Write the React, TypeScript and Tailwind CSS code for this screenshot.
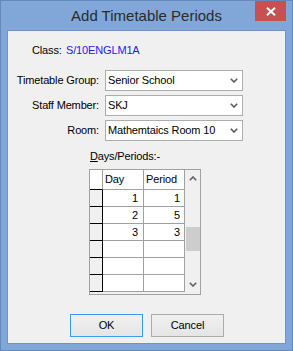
import React from "react";

function Chevron({ up = false, color = "#5a5a5a" }: { up?: boolean; color?: string }) {
  return (
    <svg width="8" height="5" viewBox="0 0 8 5" className="block">
      <path
        d={up ? "M0.8 4.2 L4 1 L7.2 4.2" : "M0.8 0.8 L4 4 L7.2 0.8"}
        fill="none"
        stroke={color}
        strokeWidth="1.6"
      />
    </svg>
  );
}

function Combo({ label, value }: { label: string; value: string }) {
  return (
    <div className="flex items-center h-[21px]">
      <div className="w-[92px] text-right pr-[1px]">{label}</div>
      <div className="ml-[5px] w-[138px] h-[21px] border border-[#acacac] bg-white flex items-center justify-between pl-[2px] pr-[4px]">
        <span>{value}</span>
        <Chevron />
      </div>
    </div>
  );
}

const rows: [string, string][] = [
  ["1", "1"],
  ["2", "5"],
  ["3", "3"],
  ["", ""],
  ["", ""],
  ["", ""],
];

export default function App() {
  return (
    <div className="w-[293px] h-[351px] bg-[#80a7d7] border border-[#6489bd] flex flex-col font-['Liberation_Sans',Arial,sans-serif] text-[11px] leading-[13px] text-black tracking-[-0.15px]">
      <div className="h-[29px] relative flex items-center justify-center">
        <span className="text-[15px] leading-[18px] text-[#2b2b2b] tracking-normal">Add Timetable Periods</span>
        <div className="absolute right-[6px] top-0 w-[31px] h-[20px] bg-[#c75050] flex items-center justify-center">
          <svg width="10" height="9" viewBox="0 0 10 9">
            <path d="M1 0.8 L9 8.2 M9 0.8 L1 8.2" stroke="white" strokeWidth="2" />
          </svg>
        </div>
      </div>
      <div className="mx-[6px] mb-[6px] flex-1 border border-[#6f93c6] bg-[#f0f0f0] flex flex-col">
        <div className="mt-[13px] pl-[24px] flex">
          <span className="w-[34px]">Class:</span>
          <span className="text-[#2222f0]">S/10ENGLM1A</span>
        </div>
        <div className="mt-[13px] flex flex-col gap-[4px]">
          <Combo label="Timetable Group:" value="Senior School" />
          <Combo label="Staff Member:" value="SKJ" />
          <Combo label="Room:" value="Mathemtaics Room 10" />
        </div>
        <div className="mt-[9px] pl-[82px]">
          <span className="underline underline-offset-1">D</span>ays/Periods:-
        </div>
        <div className="mt-[6px] ml-[81px] w-[112px] h-[126px] border border-[#a0a0a0] bg-[#f0f0f0] flex">
          <div className="flex flex-col w-[95px]">
            <div className="flex h-[20px]">
              <div className="w-[13px] bg-white border-r border-b border-[#a0a0a0] border-b-black" />
              <div className="w-[41px] bg-white border-r border-b border-[#a0a0a0] pl-[2px] flex items-center">Day</div>
              <div className="w-[41px] bg-white border-r border-b border-[#a0a0a0] pl-[2px] flex items-center">Period</div>
            </div>
            {rows.map((r, i) => (
              <div key={i} className="flex h-[17px]">
                <div className="w-[13px] bg-[#f0f0f0] border-r border-b border-black" />
                <div className="w-[41px] bg-white border-r border-b border-[#a0a0a0] pr-[5px] flex items-center justify-end">{r[0]}</div>
                <div className="w-[41px] bg-white border-r border-b border-[#a0a0a0] pr-[4px] flex items-center justify-end">{r[1]}</div>
              </div>
            ))}
          </div>
          <div className="w-[15px] bg-[#f0f0f0] flex flex-col items-center">
            <div className="h-[14px] flex items-center justify-center mt-[1px]">
              <Chevron up color="#606060" />
            </div>
            <div className="mt-[42px] w-[14px] h-[24px] bg-[#cdcdcd]" />
            <div className="mt-auto mb-[5px] h-[10px] flex items-center justify-center">
              <Chevron color="#606060" />
            </div>
          </div>
        </div>
        <div className="mt-[19px] ml-[62px] flex gap-[8px]">
          <button className="w-[73px] h-[23px] border border-[#3c9bf0] bg-gradient-to-b from-[#f0f0f0] to-[#e5e5e5] flex items-center justify-center">
            OK
          </button>
          <button className="w-[73px] h-[23px] border border-[#acacac] bg-gradient-to-b from-[#f0f0f0] to-[#e5e5e5] flex items-center justify-center">
            Cancel
          </button>
        </div>
      </div>
    </div>
  );
}
